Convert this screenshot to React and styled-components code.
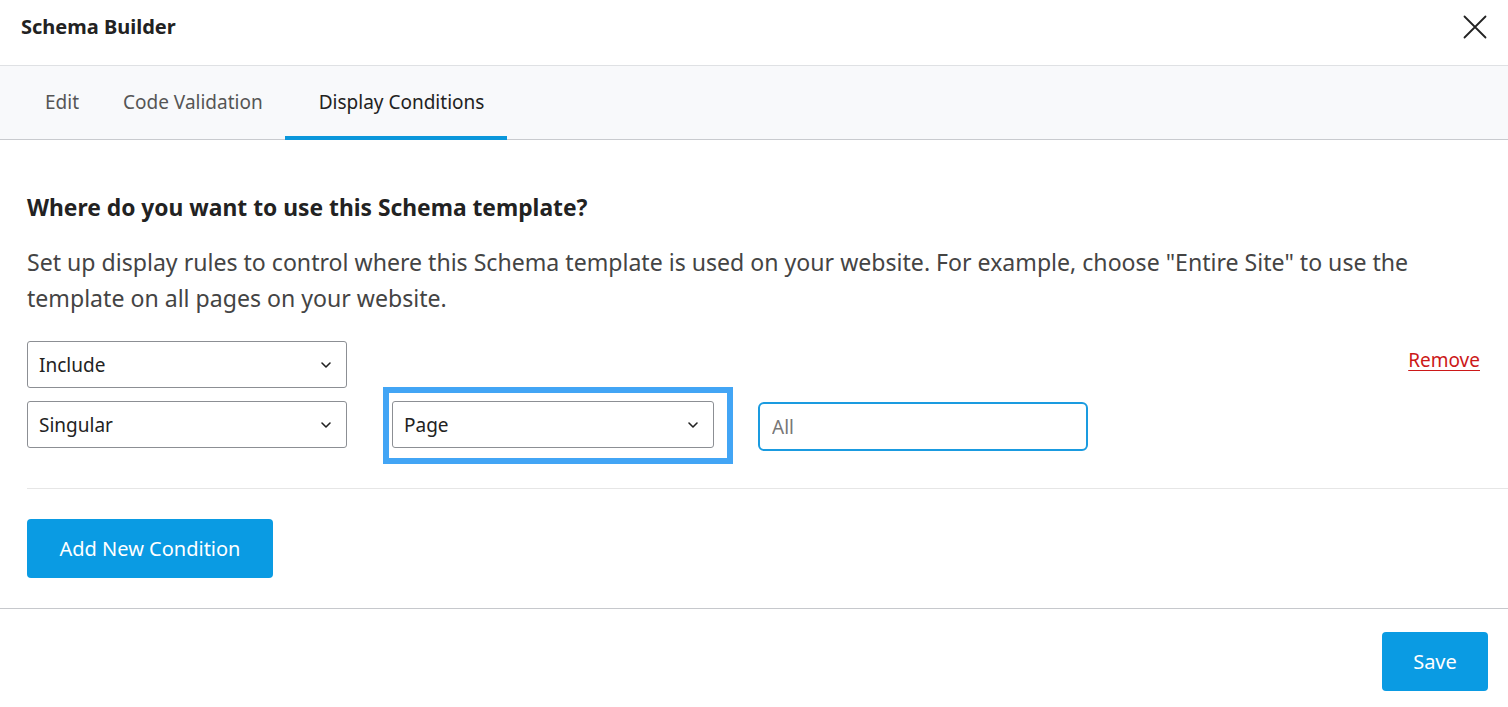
import React from 'react'
import styled, { createGlobalStyle } from 'styled-components'

const Global = createGlobalStyle`
  * { box-sizing: border-box; }
  body {
    margin: 0;
    background: #fff;
    font-family: "Noto Sans", "Open Sans", sans-serif;
    color: #222;
  }
`

function Chevron() {
    return (
        <svg width="12" height="8" viewBox="0 0 12 8" fill="none">
            <path d="M2 2l4 4 4-4" stroke="#222" strokeWidth="1.6" strokeLinecap="round" strokeLinejoin="round" />
        </svg>
    )
}

function SelectBox({ label, width }) {
    return (
        <Select width={width}>
            <span>{label}</span>
            <Chevron />
        </Select>
    )
}

function App() {
    return (
        <Modal>
            <Global />
            <Header>
                <h1>Schema Builder</h1>
                <CloseButton aria-label="Close">
                    <svg width="24" height="24" viewBox="0 0 24 24" fill="none">
                        <path d="M1.5 1.5l21 21M22.5 1.5l-21 21" stroke="#222" strokeWidth="1.8" strokeLinecap="round" />
                    </svg>
                </CloseButton>
            </Header>

            <Tabs>
                <Tab>Edit</Tab>
                <Tab>Code Validation</Tab>
                <Tab active>Display Conditions</Tab>
            </Tabs>

            <Body>
                <h2>Where do you want to use this Schema template?</h2>
                <p>
                    Set up display rules to control where this Schema template is used on your website. For example, choose "Entire Site" to use the template on all pages on your website.
                </p>

                <Condition>
                    <TopRow>
                        <SelectBox label="Include" width={320} />
                        <RemoveLink href="#">Remove</RemoveLink>
                    </TopRow>
                    <RuleRow>
                        <SelectBox label="Singular" width={320} />
                        <Highlighted>
                            <SelectBox label="Page" width={322} />
                            <HighlightFrame />
                        </Highlighted>
                        <TextInput placeholder="All" />
                    </RuleRow>
                </Condition>

                <AddButton>Add New Condition</AddButton>
            </Body>

            <Footer>
                <SaveButton>Save</SaveButton>
            </Footer>
        </Modal>
    )
}

export default App

const Modal = styled.div`
  width: 1508px;
  height: 707px;
  background: #fff;
  overflow: hidden;
`

const Header = styled.header`
  height: 66px;
  padding: 0 21px;
  display: flex;
  align-items: center;
  justify-content: space-between;
  border-bottom: 1px solid #dfe1e4;
  h1 {
    margin: 0 0 12px;
    font-size: 20px;
    font-weight: 700;
    color: #222;
  }
`

const CloseButton = styled.button`
  border: 0;
  background: none;
  padding: 0;
  margin: 0 0 11px;
  display: flex;
  cursor: pointer;
`

const Tabs = styled.nav`
  height: 74px;
  background: #f8f9fb;
  border-bottom: 1px solid #c9cbcf;
  display: flex;
  padding-left: 23px;
`

const Tab = styled.div`
  padding: ${p => (p.active ? '1px 23px 0 34px' : '1px 22px 0')};
  display: flex;
  align-items: center;
  font-size: 19px;
  color: ${p => (p.active ? '#222' : '#555')};
  border-bottom: 4px solid ${p => (p.active ? '#0b97db' : 'transparent')};
  margin-bottom: -1px;
`

const Body = styled.main`
  padding: 53px 27px 0;
  height: 468px;
  h2 {
    margin: 0 0 21px;
    font-size: 22.8px;
    line-height: 30px;
    font-weight: 700;
    color: #222;
  }
  p {
    margin: 0 0 25px;
    font-size: 23.1px;
    line-height: 36px;
    color: #444;
  }
`

const Condition = styled.div`
  padding-bottom: 37px;
  border-bottom: 1px solid #e6e6e6;
  margin-right: -27px;
  margin-bottom: 30px;
`

const TopRow = styled.div`
  display: flex;
  justify-content: space-between;
  align-items: center;
  padding-right: 28px;
  margin-bottom: 13px;
`

const RuleRow = styled.div`
  display: flex;
  align-items: flex-start;
  gap: 45px;
`

const Select = styled.div`
  width: ${p => p.width}px;
  height: 47px;
  border: 1px solid #8c8f94;
  border-radius: 3px;
  background: #fff;
  padding: 0 14px 0 11px;
  display: flex;
  align-items: center;
  justify-content: space-between;
  font-size: 19px;
  color: #222;
`

const Highlighted = styled.div`
  position: relative;
  margin-right: -1px;
`

const HighlightFrame = styled.div`
  position: absolute;
  left: -9px;
  top: -14px;
  width: 350px;
  height: 77px;
  border: 6px solid #42a5f5;
  pointer-events: none;
`

const TextInput = styled.input`
  width: 330px;
  height: 49px;
  border: 2px solid #1a9be0;
  border-radius: 6px;
  padding: 0 12px;
  font-family: inherit;
  font-size: 19px;
  color: #222;
  margin-top: 1px;
  &::placeholder { color: #777; }
  &:focus { outline: none; }
`

const RemoveLink = styled.a`
  color: #cc1818;
  font-size: 19px;
  text-decoration: underline;
  text-underline-offset: 3px;
  margin-top: -9px;
`

const BlueButton = styled.button`
  border: 0;
  border-radius: 4px;
  background: #0a9be3;
  color: #fff;
  font-family: inherit;
  font-size: 20px;
  cursor: pointer;
`

const AddButton = styled(BlueButton)`
  width: 246px;
  height: 59px;
`

const Footer = styled.footer`
  border-top: 1px solid #c6c8cc;
  display: flex;
  justify-content: flex-end;
  padding: 23px 20px 0;
`

const SaveButton = styled(BlueButton)`
  width: 106px;
  height: 59px;
`
